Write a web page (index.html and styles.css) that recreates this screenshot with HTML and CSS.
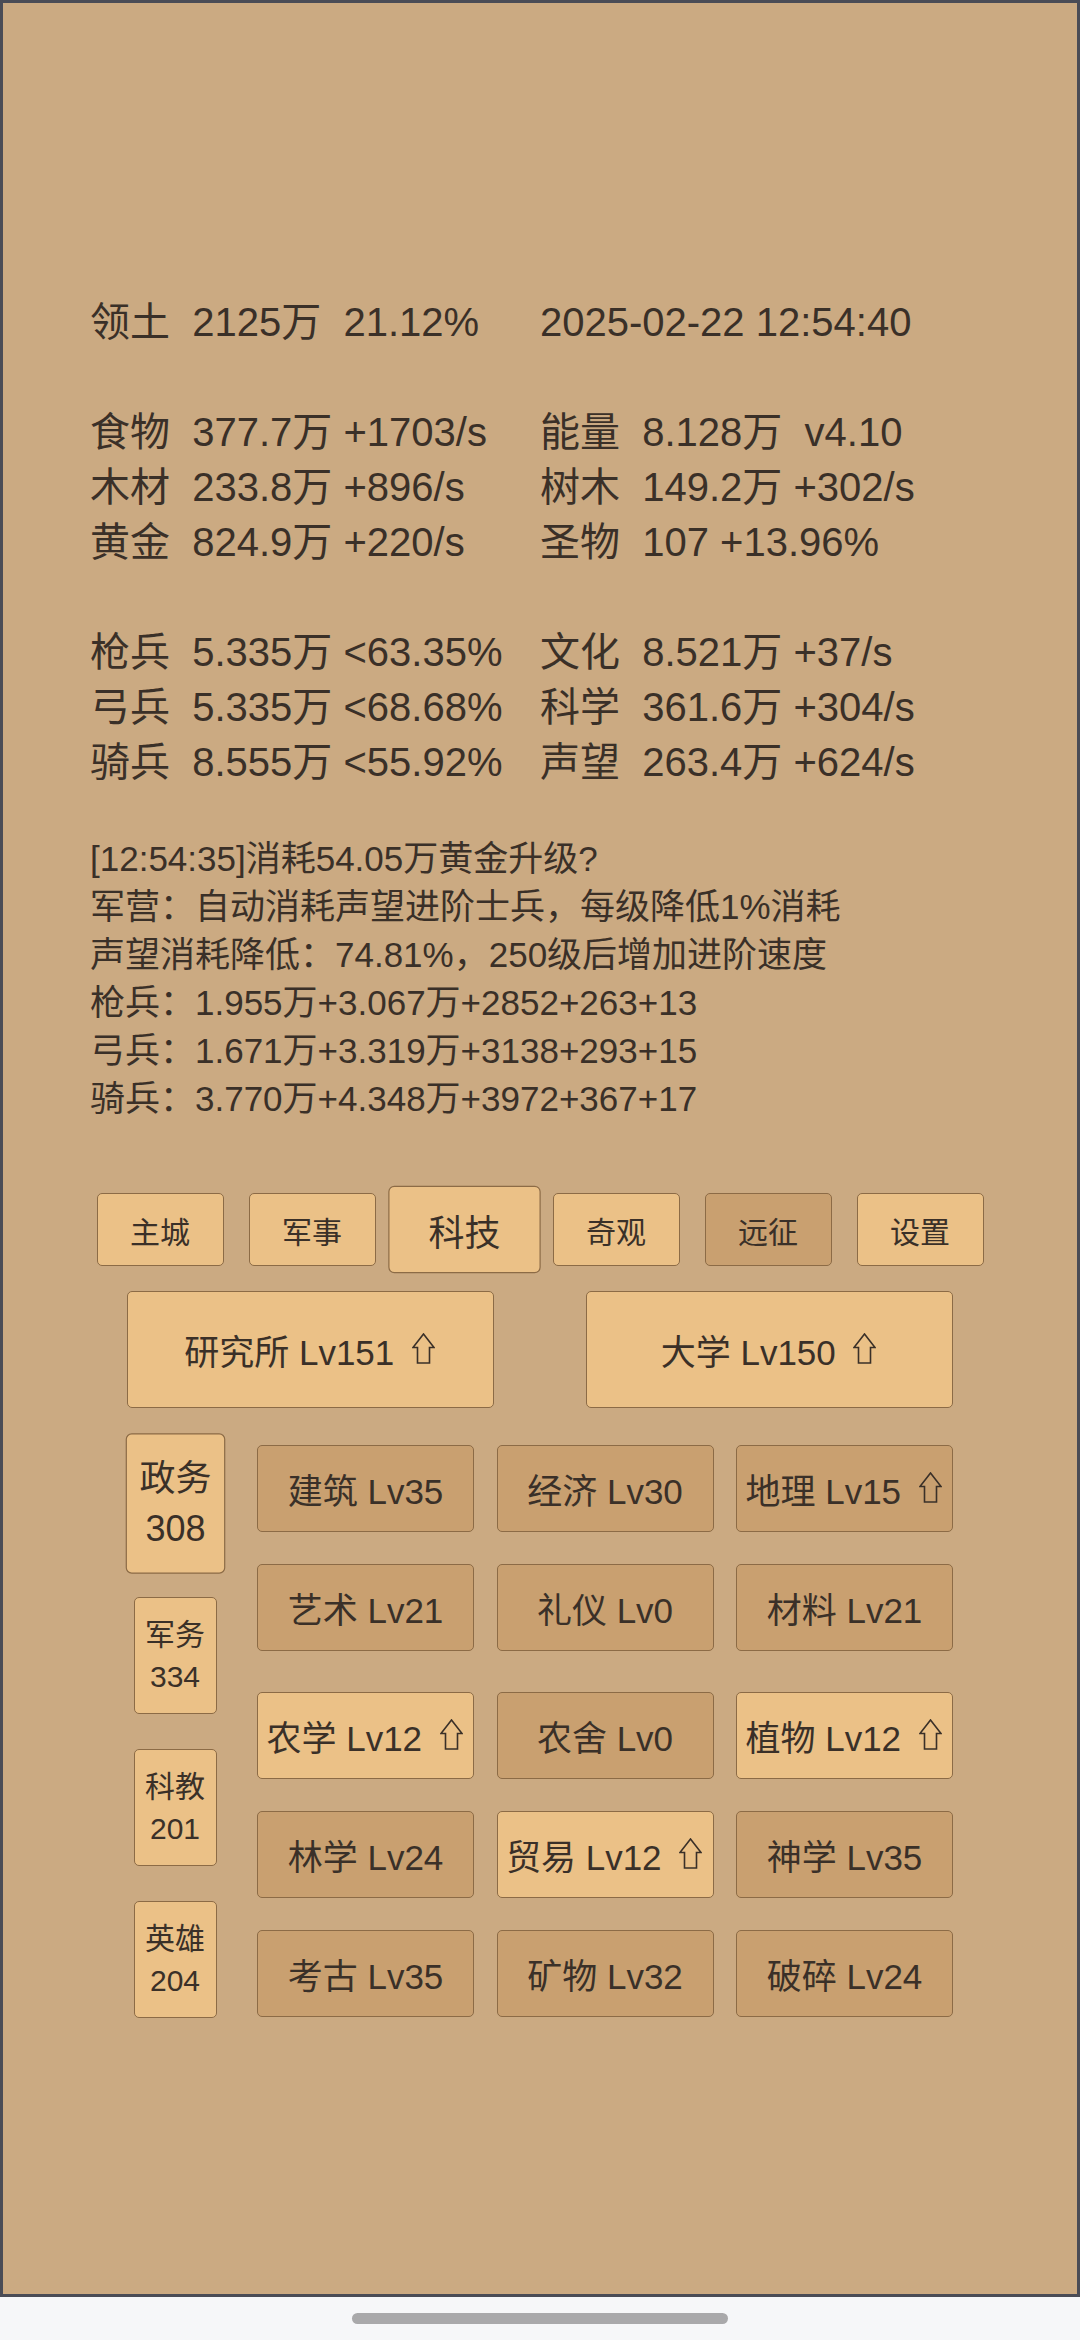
FILE: index.html
```html
<!DOCTYPE html>
<html lang="zh-CN">
<head>
<meta charset="utf-8">
<title>科技</title>
<link rel="stylesheet" href="styles.css">
</head>
<body>
<div class="screen">
  <section class="stats">
    <div class="grp">
      <div class="row">领土&nbsp;&nbsp;2125万&nbsp;&nbsp;21.12%</div>
      <div class="row">2025-02-22 12:54:40</div>
    </div>
    <div class="grp">
      <div class="row">食物&nbsp;&nbsp;377.7万 +1703/s</div>
      <div class="row">能量&nbsp;&nbsp;8.128万&nbsp;&nbsp;v4.10</div>
      <div class="row">木材&nbsp;&nbsp;233.8万 +896/s</div>
      <div class="row">树木&nbsp;&nbsp;149.2万 +302/s</div>
      <div class="row">黄金&nbsp;&nbsp;824.9万 +220/s</div>
      <div class="row">圣物&nbsp;&nbsp;107 +13.96%</div>
    </div>
    <div class="grp">
      <div class="row">枪兵&nbsp;&nbsp;5.335万 &lt;63.35%</div>
      <div class="row">文化&nbsp;&nbsp;8.521万 +37/s</div>
      <div class="row">弓兵&nbsp;&nbsp;5.335万 &lt;68.68%</div>
      <div class="row">科学&nbsp;&nbsp;361.6万 +304/s</div>
      <div class="row">骑兵&nbsp;&nbsp;8.555万 &lt;55.92%</div>
      <div class="row">声望&nbsp;&nbsp;263.4万 +624/s</div>
    </div>
  </section>

  <section class="log">
    <p>[12:54:35]消耗54.05万黄金升级?</p>
    <p>军营：自动消耗声望进阶士兵，每级降低1%消耗</p>
    <p>声望消耗降低：74.81%，250级后增加进阶速度</p>
    <p>枪兵：1.955万+3.067万+2852+263+13</p>
    <p>弓兵：1.671万+3.319万+3138+293+15</p>
    <p>骑兵：3.770万+4.348万+3972+367+17</p>
  </section>

  <nav class="tabs">
    <div class="btn tab">主城</div>
    <div class="btn tab">军事</div>
    <div class="btn tab active">科技</div>
    <div class="btn tab">奇观</div>
    <div class="btn tab dark">远征</div>
    <div class="btn tab">设置</div>
  </nav>

  <div class="labs">
    <div class="btn lab">研究所 Lv151<svg class="up" viewBox="0 0 23 31" width="23" height="31"><path d="M11.5 1 L22 14.5 H17.5 V30 H5.5 V14.5 H1 Z"/></svg></div>
    <div class="btn lab">大学 Lv150<svg class="up" viewBox="0 0 23 31" width="23" height="31"><path d="M11.5 1 L22 14.5 H17.5 V30 H5.5 V14.5 H1 Z"/></svg></div>
  </div>

  <div class="lower">
    <div class="side">
      <div class="btn dept active"><span>政务</span><span>308</span></div>
      <div class="btn dept"><span>军务</span><span>334</span></div>
      <div class="btn dept"><span>科教</span><span>201</span></div>
      <div class="btn dept"><span>英雄</span><span>204</span></div>
    </div>
    <div class="techs">
      <div class="tgrid">
        <div class="btn tech dark">建筑 Lv35</div>
        <div class="btn tech dark">经济 Lv30</div>
        <div class="btn tech dark">地理 Lv15<svg class="up" viewBox="0 0 23 31" width="23" height="31"><path d="M11.5 1 L22 14.5 H17.5 V30 H5.5 V14.5 H1 Z"/></svg></div>
        <div class="btn tech dark">艺术 Lv21</div>
        <div class="btn tech dark">礼仪 Lv0</div>
        <div class="btn tech dark">材料 Lv21</div>
      </div>
      <div class="tgrid">
        <div class="btn tech">农学 Lv12<svg class="up" viewBox="0 0 23 31" width="23" height="31"><path d="M11.5 1 L22 14.5 H17.5 V30 H5.5 V14.5 H1 Z"/></svg></div>
        <div class="btn tech dark">农舍 Lv0</div>
        <div class="btn tech">植物 Lv12<svg class="up" viewBox="0 0 23 31" width="23" height="31"><path d="M11.5 1 L22 14.5 H17.5 V30 H5.5 V14.5 H1 Z"/></svg></div>
        <div class="btn tech dark">林学 Lv24</div>
        <div class="btn tech">贸易 Lv12<svg class="up" viewBox="0 0 23 31" width="23" height="31"><path d="M11.5 1 L22 14.5 H17.5 V30 H5.5 V14.5 H1 Z"/></svg></div>
        <div class="btn tech dark">神学 Lv35</div>
        <div class="btn tech dark">考古 Lv35</div>
        <div class="btn tech dark">矿物 Lv32</div>
        <div class="btn tech dark">破碎 Lv24</div>
      </div>
    </div>
  </div>
</div>
<div class="navbar"><div class="pill"></div></div>
</body>
</html>
```

FILE: styles.css
```css
html, body {
  margin: 0;
  padding: 0;
}

body {
  width: 1080px;
  height: 2340px;
  background: #f6f7f9;
  font-family: "Liberation Sans", "Noto Sans CJK SC", sans-serif;
  color: #3a3028;
  overflow: hidden;
}

.screen {
  box-sizing: border-box;
  width: 1080px;
  height: 2297px;
  border: 3px solid #4a4c56;
  background: #cbaa82;
  padding-top: 292px;
}

/* stats block */
.stats {
  padding-left: 87px;
  font-size: 40px;
}

.grp {
  display: grid;
  grid-template-columns: 450px auto;
  grid-auto-rows: 55px;
  line-height: 55px;
  white-space: nowrap;
}

.grp + .grp {
  margin-top: 55px;
}

/* log block */
.log {
  margin-top: 45px;
  padding-left: 87px;
  font-size: 35px;
}

.log p {
  margin: 0;
  height: 48px;
  line-height: 48px;
  white-space: nowrap;
}

/* buttons */
.btn {
  box-sizing: border-box;
  display: flex;
  align-items: center;
  justify-content: center;
  background: #ebc187;
  border: 1px solid #8c6b46;
  border-radius: 5px;
  white-space: nowrap;
}

.btn.dark {
  background: #c9a070;
}

.btn.active {
  transform: scale(1.2);
}

.tabs {
  display: flex;
  justify-content: center;
  gap: 25px;
  margin-top: 70px;
}

.tab {
  width: 127px;
  height: 73px;
  font-size: 30px;
}

.labs {
  display: flex;
  justify-content: space-between;
  width: 826px;
  margin: 25px auto 0;
}

.lab {
  width: 367px;
  height: 117px;
  font-size: 35px;
}

.up {
  margin-left: 0.5em;
  margin-right: 2px;
  align-self: center;
  position: relative;
  top: -1px;
}

.up path {
  fill: none;
  stroke: #3a3028;
  stroke-width: 1.6;
  stroke-linejoin: miter;
}

.lower {
  display: flex;
  gap: 34px;
  width: 826px;
  margin: 37px auto 0;
}

.side {
  width: 96px;
  display: flex;
  flex-direction: column;
  align-items: center;
  gap: 35px;
}

.dept {
  width: 83px;
  height: 117px;
  flex-direction: column;
  font-size: 30px;
  line-height: 42px;
}

.techs {
  display: flex;
  flex-direction: column;
}

.tgrid {
  display: grid;
  grid-template-columns: repeat(3, 217px);
  grid-auto-rows: 87px;
  column-gap: 22.5px;
  row-gap: 32px;
}

.tgrid + .tgrid {
  margin-top: 41px;
}

.tech {
  font-size: 35px;
}

/* system nav */
.navbar {
  height: 43px;
  display: flex;
  align-items: center;
  justify-content: center;
}

.pill {
  width: 376px;
  height: 11px;
  border-radius: 6px;
  background: #a9a9ab;
}
```
